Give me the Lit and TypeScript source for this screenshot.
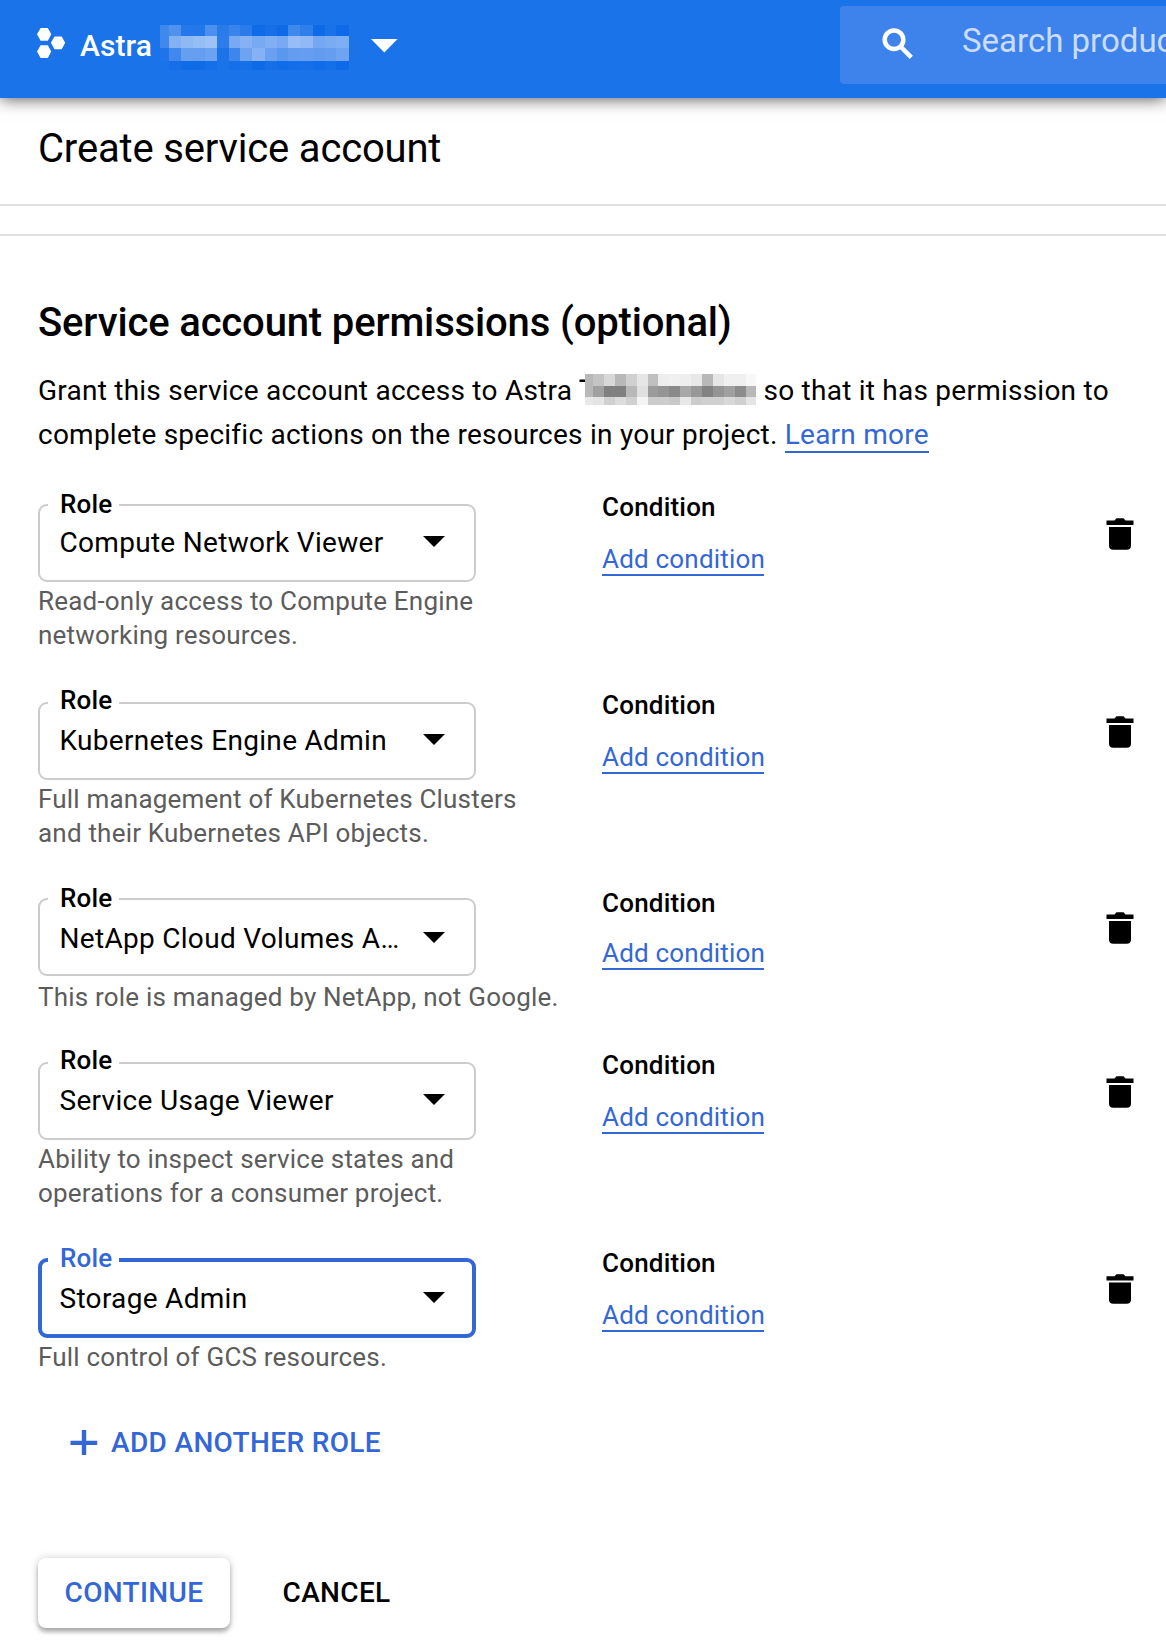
import { LitElement, html, css, svg } from "lit";
import { customElement, property } from "lit/decorators.js";
import { styleMap } from "lit/directives/style-map.js";

interface Role {
  name: string;
  help: string;
  height: number;
  labelTop: number;
  textShift: number;
  helpGap: number;
  condTop: number;
  condGap: number;
  trashTop: number;
  trashHeight: number;
  focused?: boolean;
}

const ROLES: Role[] = [
  { name: "Compute Network Viewer", help: "Read-only access to Compute Engine networking resources.", height: 198, labelTop: -15, textShift: 0, helpGap: 2, condTop: -12, condGap: 22, trashTop: 14, trashHeight: 32 },
  { name: "Kubernetes Engine Admin", help: "Full management of Kubernetes Clusters and their Kubernetes API objects.", height: 196, labelTop: -17, textShift: 0, helpGap: 2, condTop: -12, condGap: 22, trashTop: 14, trashHeight: 32 },
  { name: "NetApp Cloud Volumes A…", help: "This role is managed by NetApp, not Google.", height: 164, labelTop: -15, textShift: 2, helpGap: 4, condTop: -10, condGap: 20, trashTop: 14, trashHeight: 32 },
  { name: "Service Usage Viewer", help: "Ability to inspect service states and operations for a consumer project.", height: 196, labelTop: -17, textShift: 0, helpGap: 2, condTop: -12, condGap: 22, trashTop: 14, trashHeight: 32 },
  { name: "Storage Admin", help: "Full control of GCS resources.", height: 168, labelTop: -15, textShift: 2, helpGap: 2, condTop: -10, condGap: 22, trashTop: 16, trashHeight: 30, focused: true },
];

/* Pixelated placeholders for the redacted project name. */
const BLUE_X = [0, 9, 21, 33, 45, 56.5, 68.5, 80, 92, 105, 117, 128, 140, 152.5, 165, 176, 188.5, 200];
const BLUE_Y = [0, 11, 23, 35.5, 45];
const BLUE = [
  "3f88ec 4f92ee 2478ea 2277ea 4b90ee 2a7bea 3884ec 2a7ceb 0f6be8 176fe8 0f6ae8 3f88ec 2f7feb 0f6ae8 1a72e8 0f6ae8 1a73e8",
  "4088ed 84b0f4 8fb8f5 96bef6 9cc2f7 2c7cec 78aaf3 86b1f4 78aaf2 82aef3 78a9f2 98bcf6 92b8f5 74a8f2 7aacf2 7eaef3 1c73e8",
  "1f74e9 4088ed 669ff0 659ef0 6ba2f1 1d73e8 3c86ec 6ea3f1 86b2f4 6aa0f0 5a97ef 649df0 659ef0 629cf0 659ef0 6ea4f1 1c73e8",
  "1a73e8 166fe8 0f6be8 0f6be8 156fe8 1a73e8 156fe8 1870e8 0f6ae8 166fe8 106ce8 146ee8 166fe8 106ce8 156fe8 0f6ae8 1a73e8",
].map((r) => r.split(" "));

const GRAY_X = [6, ...Array.from({ length: 16 }, (_, i) => 14 + i * 10.9)];
const GRAY_Y = [0, 11.5, 22.5, 31];
const GRAY = [
  "b8 c4 d8 b8 d0 e6 c0 ee f0 ee e8 b8 e6 f0 f0 f8",
  "b8 a0 80 80 b8 e0 9c 94 8a a8 98 82 94 a0 8c b8",
  "e8 e4 d0 dc d0 f4 cc cc c8 e8 cc d0 d0 d8 d0 e4",
].map((r) => r.split(" ").map((v) => v + v + v));

const mosaic = (xs: number[], ys: number[], cells: string[][]) =>
  cells.flatMap((row, j) =>
    row.map((c, i) => svg`<rect x=${xs[i]} y=${ys[j]} width=${xs[i + 1] - xs[i]} height=${ys[j + 1] - ys[j]} fill=${"#" + c} shape-rendering="crispEdges"/>`)
  );

@customElement("role-row")
export class RoleRow extends LitElement {
  @property({ attribute: false }) role_!: Role;

  static styles = css`
    :host { display: block; }
    .row { display: grid; grid-template-columns: 564px 504px 28px; align-items: start; height: var(--height); }
    .field {
      position: relative; box-sizing: border-box; width: 438px; height: 78px;
      border: 2px solid #ccc; border-radius: 9px;
      display: flex; align-items: flex-start; justify-content: space-between;
      padding: calc(20px + var(--shift)) 29px 0 19.500px;
    }
    .label {
      position: absolute; left: 8px; top: var(--label-top); width: 71px; box-sizing: border-box;
      padding-left: 12px; background: #fff; font-weight: 500; line-height: 30px;
    }
    .value { font-size: 28px; line-height: 33px; letter-spacing: 0.3px; white-space: nowrap; }
    .caret { margin-top: 10px; display: block; }
    .focused { height: 80px; border: 4px solid #3367d6; padding: calc(18px + var(--shift)) 27px 0 17.500px; }
    .focused .label { left: 6px; color: #3367d6; }
    .help { width: 524px; margin-top: var(--help-gap); line-height: 34px; color: #5c5c5c; }
    .condition { display: flex; flex-direction: column; align-items: flex-start; gap: var(--cond-gap); margin-top: var(--cond-top); line-height: 30px; }
    .title { font-weight: 500; }
    .link { color: #3367d6; border-bottom: 2px solid #3367d6; text-decoration: none; width: 162px; white-space: nowrap; }
    .trash { display: block; margin-top: var(--trash-top); height: var(--trash-height); width: 28px; }
  `;

  render() {
    const r = this.role_;
    return html`<div class="row" style=${styleMap({
      "--height": `${r.height}px`,
      "--label-top": `${r.labelTop - (r.focused ? 4 : 2)}px`,
      "--shift": `${r.textShift}px`,
      "--help-gap": `${r.helpGap}px`,
      "--cond-top": `${r.condTop}px`,
      "--cond-gap": `${r.condGap}px`,
      "--trash-top": `${r.trashTop}px`,
      "--trash-height": `${r.trashHeight}px`,
    })}>
      <div>
        <div class="field ${r.focused ? "focused" : ""}">
          <span class="label">Role</span>
          <span class="value">${r.name}</span>
          <svg class="caret" width="22" height="11" viewBox="0 0 22 11"><path d="M0 0h22L11 11z"/></svg>
        </div>
        <div class="help">${r.help}</div>
      </div>
      <div class="condition">
        <span class="title">Condition</span>
        <a class="link">Add condition</a>
      </div>
      <svg class="trash" viewBox="0 0 28 32" preserveAspectRatio="none">
        <path d="M.5 2.500H8.500L10.500.3h7l2 2.200h8V7H.5zM3 9h22v18.500q0 4.300-4.300 4.300H7.300Q3 31.800 3 27.500z"/>
      </svg>
    </div>`;
  }
}

@customElement("app-root")
export class AppRoot extends LitElement {
  static styles = css`
    :host {
      display: block; width: 1166px; height: 1652px; overflow: hidden; background: #fff; color: #000;
      font-family: Roboto, "Liberation Sans", sans-serif; font-size: 26px; letter-spacing: 0.2px;
    }
    .bar { display: flex; align-items: flex-start; height: 98px; background: #1a73e8; color: #fff; box-shadow: 0 0 16px rgba(0, 0, 0, 0.75); }
    .logo { margin: 27px 0 0 37px; }
    .project { margin: 28px 0 0 14px; font-size: 30px; line-height: 35px; font-weight: 500; width: 80px; letter-spacing: 0.1px; }
    .redacted { margin-top: 25px; }
    .drop { margin: 39px 0 0 11px; }
    .search {
      margin: 6px 0 0 auto; width: 326px; height: 78px; box-sizing: border-box; padding: 15px 0 0 42px;
      display: flex; align-items: flex-start; border-radius: 4px 0 0 4px; background: #3e83eb; overflow: hidden;
    }
    .lens { flex: none; margin-top: 7px; }
    .hint { margin-left: 48px; font-size: 33px; line-height: 39px; letter-spacing: 0; white-space: nowrap; color: #cbdcf9; }
    .page-title { margin: 0; padding: 27px 38px 32px; line-height: 47px; font-size: 40px; font-weight: 400; letter-spacing: -0.17px; border-bottom: 2px solid #e0e0e0; }
    .strip { height: 28px; border-bottom: 2px solid #e0e0e0; }
    .content { padding: 63px 32px 0 38px; }
    .heading { margin: 0; font-size: 40px; line-height: 47px; font-weight: 500; letter-spacing: -0.15px; }
    .intro { margin: 23px 0 47px; font-size: 28px; line-height: 44px; letter-spacing: 0.24px; white-space: nowrap; }
    .intro svg { vertical-align: -6px; }
    .more { color: #3367d6; text-decoration: none; display: inline-block; line-height: 32px; border-bottom: 2px solid #3367d6; }
    .add { display: flex; gap: 13px; align-items: flex-start; padding-left: 32px; color: #3367d6; font-size: 28px; font-weight: 500; line-height: 33px; letter-spacing: 0.35px; height: 132px; }
    .plus { margin-top: 3px; }
    .actions { display: flex; font-size: 28px; line-height: 33px; font-weight: 500; letter-spacing: 0.35px; }
    .continue { box-sizing: border-box; width: 192px; height: 70px; padding: 18px 0 0 26.500px; border-radius: 8px; color: #3367d6; box-shadow: 0 4px 4px rgba(0, 0, 0, 0.27), 0 0 8px rgba(0, 0, 0, 0.18); }
    .cancel { padding: 18px 0 0 52.500px; }
  `;

  render() {
    return html`
      <header class="bar">
        <svg class="logo" width="29" height="32" viewBox="0 0 29 32" fill="#fff">
          <path d="M0 7.300 3.600 1h7.200l3.500 6.300-3.500 6.400H3.600zM13.900 15.800l3.600-6.300h7.200l3.500 6.300-3.500 6.400h-7.200zM0 24.500l3.600-6.300h7.200l3.500 6.300-3.500 6.400H3.600z"/>
        </svg>
        <span class="project">Astra</span>
        <svg class="redacted" width="200" height="45" viewBox="0 0 200 45">${mosaic(BLUE_X, BLUE_Y, BLUE)}</svg>
        <svg class="drop" width="27" height="14" viewBox="0 0 27 14"><path d="M0 0h26.600L13.300 13.500z" fill="#fff"/></svg>
        <div class="search">
          <svg class="lens" width="32" height="32" viewBox="0 0 32 32" fill="none" stroke="#fff" stroke-width="4.500">
            <circle cx="12" cy="11.700" r="9.300"/><path d="M17.500 17.500 29.300 29.300"/>
          </svg>
          <span class="hint">Search products and resources</span>
        </div>
      </header>
      <h1 class="page-title">Create service account</h1>
      <div class="strip"></div>
      <main class="content">
        <h2 class="heading">Service account permissions (optional)</h2>
        <p class="intro">Grant this service account access to Astra <svg width="177" height="32" viewBox="0 0 177 32"><rect x="0.500" y="5.500" width="5.500" height="2.500"/>${mosaic(GRAY_X, GRAY_Y, GRAY)}</svg> so that it has permission to<br>complete specific actions on the resources in your project. <a class="more">Learn more</a></p>
        ${ROLES.map((r) => html`<role-row .role_=${r}></role-row>`)}
        <div class="add">
          <svg class="plus" width="28" height="28" viewBox="0 0 28 28" fill="#3367d6"><path d="M11.800 1h4.400v10.800h11v4.200h-11v10h-4.400V16H.5v-4.200h11.300z"/></svg>
          <span>ADD ANOTHER ROLE</span>
        </div>
        <div class="actions">
          <span class="continue">CONTINUE</span>
          <span class="cancel">CANCEL</span>
        </div>
      </main>`;
  }
}
